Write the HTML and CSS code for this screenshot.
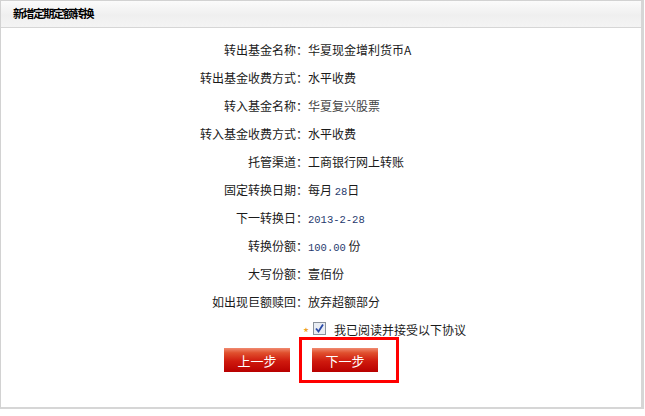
FILE: index.html
```html
<!DOCTYPE html>
<html lang="zh-CN">
<head>
<meta charset="utf-8">
<title>新增定期定额转换</title>
<link rel="stylesheet" href="styles.css">
</head>
<body>
<div class="panel">
  <div class="panel-head"><h1 class="title">新增定期定额转换</h1></div>
  <div class="panel-body">
    <dl class="info">
      <dt>转出基金名称：</dt><dd>华夏现金增利货币A</dd>
      <dt>转出基金收费方式：</dt><dd>水平收费</dd>
      <dt>转入基金名称：</dt><dd class="muted">华夏复兴股票</dd>
      <dt>转入基金收费方式：</dt><dd>水平收费</dd>
      <dt>托管渠道：</dt><dd>工商银行网上转账</dd>
      <dt>固定转换日期：</dt><dd>每月&nbsp;<span class="num">28</span>日</dd>
      <dt>下一转换日：</dt><dd><span class="num">2013-2-28</span></dd>
      <dt>转换份额：</dt><dd><span class="num">100.00</span>&nbsp;份</dd>
      <dt>大写份额：</dt><dd>壹佰份</dd>
      <dt>如出现巨额赎回：</dt><dd>放弃超额部分</dd>
    </dl>
    <div class="agree">
      <span class="star">*</span>
      <svg class="check" width="13" height="13" viewBox="0 0 13 13">
        <rect x="0.5" y="0.5" width="12" height="12" fill="#e9edf3" stroke="#8a929c"/>
        <path d="M3 6.5 L5.5 9.5 L10 2.5" fill="none" stroke="#2a4aa8" stroke-width="1.8"/>
      </svg>
      <span class="agree-text">我已阅读并接受以下协议</span>
    </div>
    <div class="actions">
      <button class="btn">上一步</button>
      <button class="btn btn-next">下一步</button>
      <span class="highlight"></span>
    </div>
  </div>
</div>
</body>
</html>
```
FILE: styles.css
```css
* { box-sizing: border-box; }
html, body { margin: 0; padding: 0; background: #fff; }
body {
  font-family: "Noto Sans CJK SC", "Liberation Sans", sans-serif;
  font-size: 12px;
  color: #222;
}
.panel {
  width: 644px;
  height: 409px;
  border: 1px solid #d2d2d2;
  border-right: 3px solid #d6d6d6;
  border-bottom: 2px solid #d6d6d6;
  display: flex;
  flex-direction: column;
}
.panel-head {
  height: 27px;
  border-bottom: 1px solid #d6d6d6;
  background: linear-gradient(#fbfbfb 0%, #efefef 55%, #f4f4f4 100%);
  display: flex;
  align-items: center;
  padding-left: 12px;
}
.title {
  margin: 0;
  font-size: 11.5px;
  font-weight: bold;
  letter-spacing: -1.5px;
  color: #000;
  line-height: 1;
}
.panel-body {
  position: relative;
  padding-top: 8px;
}
.info {
  margin: 0;
  display: grid;
  grid-template-columns: 307px 1fr;
  grid-auto-rows: 28px;
}
.info dt, .info dd {
  margin: 0;
  line-height: 28px;
  color: #1a1a1a;
  white-space: nowrap;
}
.info dt { text-align: right; }
.info dd.muted { color: #444; }
.num {
  font-family: "Liberation Mono", monospace;
  font-size: 10.5px;
  color: #1f3a6e;
}
.agree {
  height: 28px;
  display: flex;
  align-items: center;
  padding-left: 302px;
}
.star {
  color: #f0a020;
  font-size: 13px;
  width: 10px;
  line-height: 1;
  margin-top: 5px;
}
.check { display: block; margin-right: 8px; margin-top: -3px; }
.agree-text { color: #1a1a1a; line-height: 1; }
.actions {
  position: relative;
  display: flex;
  gap: 22px;
  padding-left: 223px;
  margin-top: 4px;
}
.btn {
  width: 66px;
  height: 24px;
  border: 0;
  padding: 0;
  color: #fff;
  font-family: "Noto Sans CJK SC", sans-serif;
  font-size: 13px;
  background: linear-gradient(#f08a70 0%, #e0502e 20%, #cf1a0e 55%, #b80000 100%);
  cursor: pointer;
}
.highlight {
  position: absolute;
  left: 298px;
  top: -11px;
  width: 100px;
  height: 46px;
  border: 3px solid #ff0000;
  pointer-events: none;
}
```
